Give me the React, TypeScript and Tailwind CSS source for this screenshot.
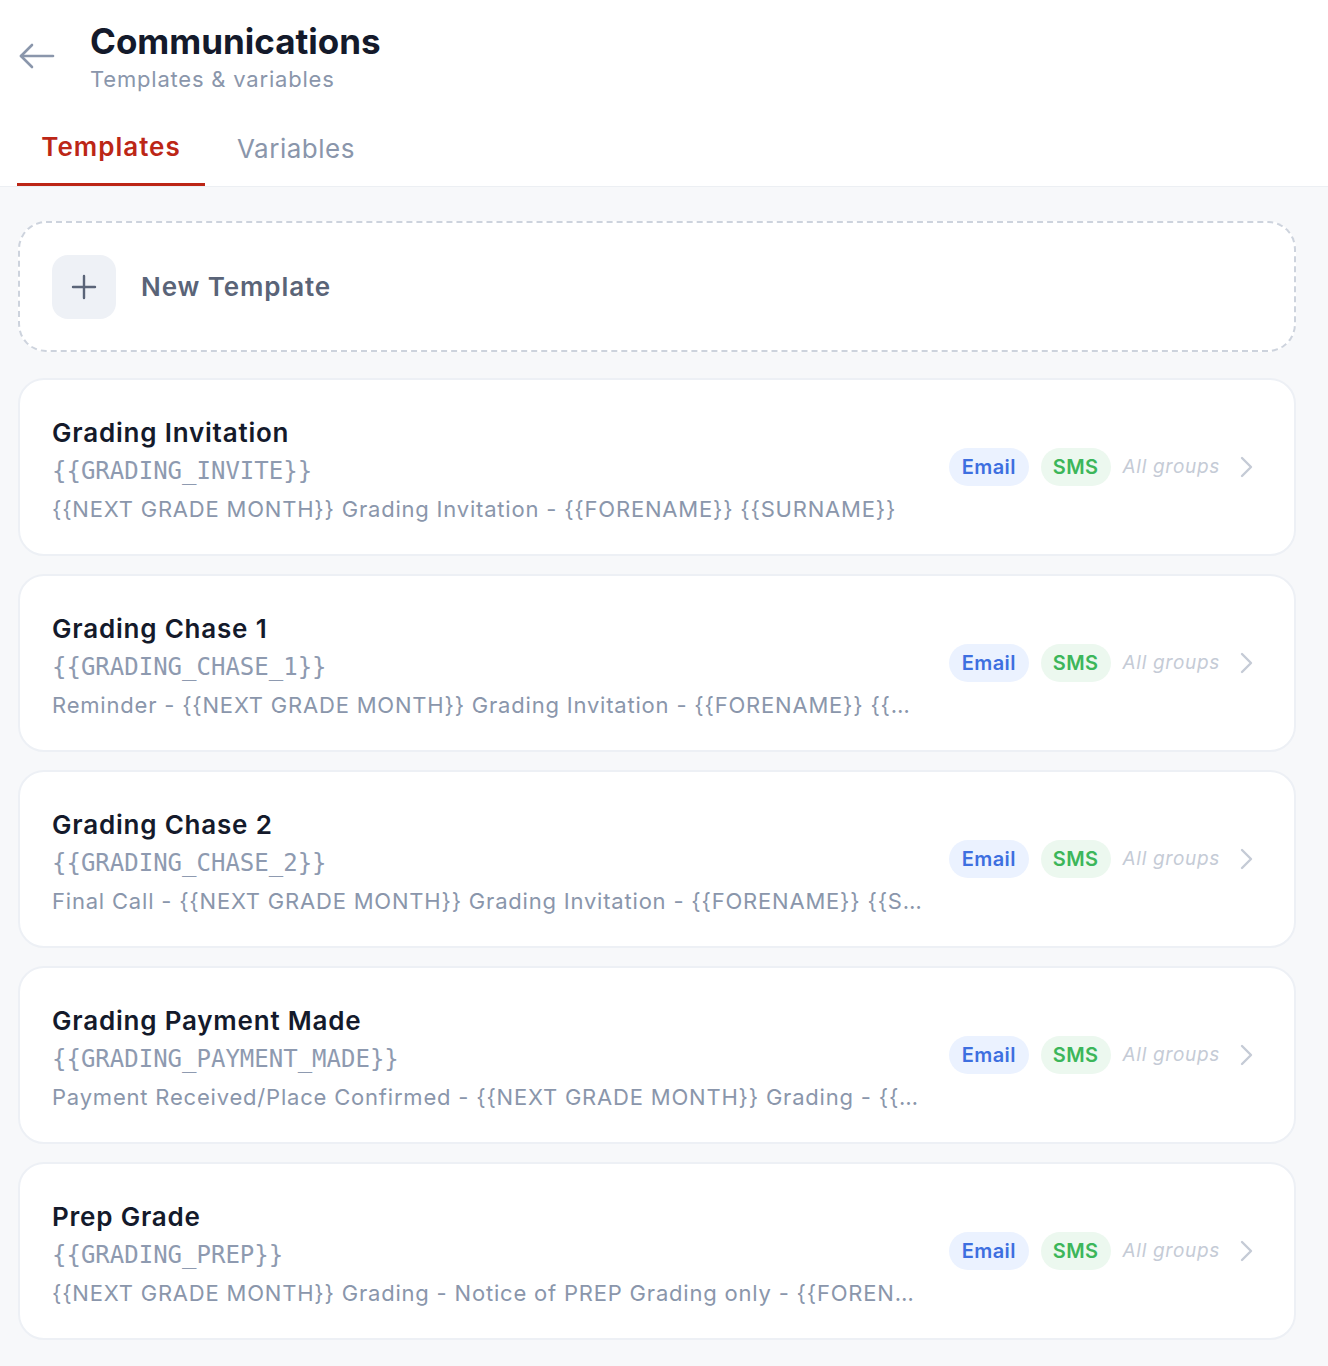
import React from "react";

const templates = [
  {
    title: "Grading Invitation",
    code: "{{GRADING_INVITE}}",
    desc: "{{NEXT GRADE MONTH}} Grading Invitation - {{FORENAME}} {{SURNAME}}",
  },
  {
    title: "Grading Chase 1",
    code: "{{GRADING_CHASE_1}}",
    desc: "Reminder - {{NEXT GRADE MONTH}} Grading Invitation - {{FORENAME}} {{SURNAME}}",
  },
  {
    title: "Grading Chase 2",
    code: "{{GRADING_CHASE_2}}",
    desc: "Final Call - {{NEXT GRADE MONTH}} Grading Invitation - {{FORENAME}} {{SURNAME}}",
  },
  {
    title: "Grading Payment Made",
    code: "{{GRADING_PAYMENT_MADE}}",
    desc: "Payment Received/Place Confirmed - {{NEXT GRADE MONTH}} Grading - {{FORENAME}} {{SURNAME}}",
  },
  {
    title: "Prep Grade",
    code: "{{GRADING_PREP}}",
    desc: "{{NEXT GRADE MONTH}} Grading - Notice of PREP Grading only - {{FORENAME}} {{SURNAME}}",
  },
];

export default function App() {
  return (
    <div
      className="min-h-[1366px] w-[1328px] bg-[#f7f8fa]"
      style={{ fontFamily: "Inter, 'Noto Sans', sans-serif" }}
    >
      <div className="bg-white border-b border-[#eceff3]">
        <div className="flex items-start pl-[18px] pt-[21px]">
          <div className="w-[72px] pt-[20px]">
            <svg width="38" height="30" viewBox="0 0 38 30" fill="none" stroke="#8a96ab" strokeWidth="2.6" strokeLinecap="round" strokeLinejoin="round">
              <path d="M35 15H3" />
              <path d="M14 4L3 15l11 11" />
            </svg>
          </div>
          <div>
            <div className="text-[35px] leading-[40px] font-bold text-[#141a2b]">Communications</div>
            <div className="mt-[3px] text-[22px] leading-[30px] text-[#8a96ab] tracking-[0.8px]">Templates &amp; variables</div>
          </div>
        </div>
        <div className="flex pl-[17px] mt-[35px]">
          <div className="w-[188px] flex flex-col items-center">
            <div className="text-[26px] leading-[36px] font-semibold text-[#bc2616] tracking-[1px] pb-[18px]">Templates</div>
            <div className="h-[3px] w-full bg-[#bc2616]" />
          </div>
          <div className="ml-[32px] text-[26px] leading-[36px] text-[#8a96ab] tracking-[0.5px] pt-[2px]">Variables</div>
        </div>
      </div>

      <div className="pl-[18px] pr-[32px] pt-[34px] pb-[26px] flex flex-col gap-[18px]">
        <div className="h-[131px] rounded-[28px] border-2 border-dashed border-[#cdd3dd] bg-white flex items-center pl-[32px] mb-[8px]">
          <div className="w-[64px] h-[64px] rounded-[16px] bg-[#eef1f6] flex items-center justify-center">
            <svg width="28" height="28" viewBox="0 0 28 28" fill="none" stroke="#5a6478" strokeWidth="2.4" strokeLinecap="round">
              <path d="M14 3v22M3 14h22" />
            </svg>
          </div>
          <div className="ml-[25px] text-[26px] font-semibold text-[#5a6478] tracking-[0.9px]">New Template</div>
        </div>

        {templates.map((t) => (
          <div
            key={t.title}
            className="h-[178px] rounded-[26px] border-2 border-[#edf0f5] bg-white flex items-center pl-[32px] pr-[40px]"
          >
            <div className="flex-1 min-w-0 pr-[24px] pt-[8px]">
              <div className="text-[26px] leading-[38px] font-semibold text-[#141a2b] tracking-[0.8px]">{t.title}</div>
              <div
                className="text-[24px] leading-[38px] text-[#8e9ab0]"
                style={{ fontFamily: "'DejaVu Sans Mono', 'Liberation Mono', monospace" }}
              >
                {t.code}
              </div>
              <div className="text-[22px] leading-[38px] text-[#8a96ab] tracking-[0.8px] truncate max-w-[872px]">{t.desc}</div>
            </div>
            <div className="flex items-center shrink-0">
              <span className="h-[38px] px-[13px] rounded-full bg-[#ebf2ff] text-[#3d6fe0] text-[20px] tracking-[0.4px] font-semibold flex items-center">Email</span>
              <span className="ml-[12px] h-[38px] px-[12px] rounded-full bg-[#ecf8ef] text-[#3cb65a] text-[20px] tracking-[0.4px] font-semibold flex items-center">SMS</span>
              <span className="ml-[12px] text-[19px] italic text-[#c5cbd6] tracking-[0.7px]">All groups</span>
              <svg className="ml-[18px]" width="16" height="24" viewBox="0 0 16 24" fill="none" stroke="#c5cbd6" strokeWidth="2.4" strokeLinecap="round" strokeLinejoin="round">
                <path d="M4 3l9 9-9 9" />
              </svg>
            </div>
          </div>
        ))}
      </div>
    </div>
  );
}
